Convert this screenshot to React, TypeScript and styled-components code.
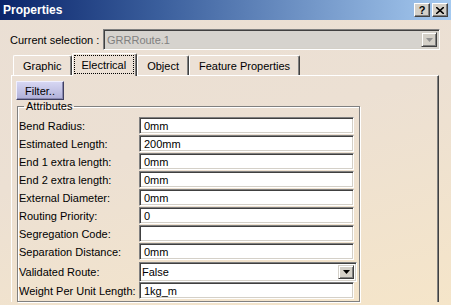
import React, { FC } from 'react'
import styled, { createGlobalStyle } from 'styled-components'

const GlobalStyle = createGlobalStyle`
  html, body {
    margin: 0;
    padding: 0;
    background: #ECE1D6;
  }
  body {
    font-family: "Liberation Sans", Arial, sans-serif;
    font-size: 11px;
    color: #000;
  }
`

const Window = styled.div`
  width: 451px;
  height: 305px;
  overflow: hidden;
  background: linear-gradient(165deg, #EADFD4 0%, #ECE0D3 45%, #F5E5C9 100%);
  display: flex;
  flex-direction: column;
`

const TitleBar = styled.div`
  height: 20px;
  flex: none;
  display: flex;
  align-items: center;
  justify-content: space-between;
  padding: 0 3px 0 3px;
  background: linear-gradient(90deg, #0A246A 0%, #3A5E9C 35%, #A6CAF0 100%);
`

const Title = styled.span`
  color: #fff;
  font-weight: bold;
  font-size: 12px;
`

const TitleButtons = styled.div`
  display: flex;
  gap: 2px;
`

const CaptionButton = styled.div`
  width: 14px;
  height: 12px;
  background: #D4D0C8;
  border: 1px solid;
  border-color: #fff #404040 #404040 #fff;
  box-shadow: inset -1px -1px 0 #808080;
  display: flex;
  align-items: center;
  justify-content: center;
  font-weight: bold;
  font-size: 11px;
  line-height: 12px;
`

const Body = styled.div`
  display: flex;
  flex-direction: column;
  padding: 9px 0 0 0;
`

const SelectionRow = styled.div`
  display: flex;
  align-items: center;
  padding-left: 10px;
`

const SelectionLabel = styled.span`
  width: 93px;
`

const Combo = styled.div<{ $disabled?: boolean; $width: number; $height: number; $inset: number }>`
  width: ${p => p.$width}px;
  height: ${p => p.$height}px;
  box-sizing: border-box;
  display: flex;
  align-items: center;
  justify-content: space-between;
  background: ${p => (p.$disabled ? '#D6D3CE' : '#fff')};
  color: ${p => (p.$disabled ? '#808080' : '#000')};
  border: 1px solid;
  border-color: #808080 #fff #fff #808080;
  box-shadow: inset 1px 1px 0 #404040, inset -1px -1px 0 #D4D0C8;
  padding: 2px 2px 2px ${p => p.$inset}px;
`

const DropButton = styled.div<{ $disabled?: boolean }>`
  width: 16px;
  height: 100%;
  box-sizing: border-box;
  background: #D4D0C8;
  border: 1px solid;
  border-color: #D4D0C8 #404040 #404040 #D4D0C8;
  box-shadow: inset 1px 1px 0 #fff, inset -1px -1px 0 #808080;
  display: flex;
  align-items: center;
  justify-content: center;
  svg { fill: ${p => (p.$disabled ? '#909090' : '#000')}; }
`

const TabStrip = styled.div`
  display: flex;
  align-items: flex-end;
  margin: 3px 0 0 13px;
  height: 22px;
  position: relative;
  z-index: 1;
`

const Tab = styled.div<{ $active?: boolean }>`
  height: ${p => (p.$active ? 23 : 20)}px;
  margin-bottom: ${p => (p.$active ? -1 : 0)}px;
  box-sizing: border-box;
  background: #ECE1D6;
  border-left: 1px solid #fff;
  border-top: 1px solid #fff;
  border-right: 1px solid #404040;
  border-top-left-radius: 2px;
  border-top-right-radius: 2px;
  box-shadow: inset -1px 0 0 #808080;
  padding: ${p => (p.$active ? '1px 2px 2px 1px' : '0 9px')};
  display: flex;
  align-items: center;
`

const FocusRing = styled.span`
  height: 100%;
  box-sizing: border-box;
  border: 1px dotted #000;
  padding: 0 7px;
  display: flex;
  align-items: center;
`

const Panel = styled.div`
  margin-left: 11px;
  width: 428px;
  flex: 1;
  box-sizing: border-box;
  border-top: 1px solid #fff;
  border-left: 1px solid #fff;
  border-right: 1px solid #404040;
  box-shadow: inset -1px 0 0 #808080;
  padding: 5px 0 0 4px;
  display: flex;
  flex-direction: column;
  align-items: flex-start;
`

const FilterButton = styled.div`
  width: 48px;
  height: 19px;
  box-sizing: border-box;
  border: 1px solid;
  border-color: #F0F0FF #404060 #404060 #F0F0FF;
  box-shadow: inset -1px -1px 0 #8888B0;
  background: linear-gradient(180deg, #D6D6F2 0%, #C4C4E6 50%, #B0B0D8 100%);
  display: flex;
  align-items: center;
  justify-content: center;
`

const GroupBox = styled.fieldset`
  margin: 0 0 0 1px;
  width: 343px;
  box-sizing: border-box;
  padding: 4px 0 1px 0;
  border: 1px solid #808080;
  box-shadow: 1px 1px 0 #fff, inset 1px 1px 0 #fff;
  min-inline-size: 0;
`

const Legend = styled.legend`
  margin-left: 6px;
  padding: 0 2px;
  line-height: 13px;
`

const Row = styled.div<{ $tall?: boolean }>`
  display: flex;
  align-items: center;
  height: ${p => (p.$tall ? 21 : 18)}px;
`

const Label = styled.span`
  width: 121px;
  padding-left: 1px;
  box-sizing: border-box;
  flex: none;
`

const Field = styled.div`
  width: 215px;
  height: 17px;
  box-sizing: border-box;
  align-self: flex-start;
  background: #fff;
  border: 1px solid;
  border-color: #808080 #fff #fff #808080;
  box-shadow: inset 1px 1px 0 #404040, inset -1px -1px 0 #D4D0C8;
  padding: 0 0 0 4px;
  display: flex;
  align-items: center;
`

const Arrow: FC = () => (
  <svg width="7" height="4" viewBox="0 0 7 4">
    <path d="M0 0h7L3.5 4z" />
  </svg>
)

const attributes: { label: string; value: string; combo?: boolean }[] = [
  { label: 'Bend Radius:', value: '0mm' },
  { label: 'Estimated Length:', value: '200mm' },
  { label: 'End 1 extra length:', value: '0mm' },
  { label: 'End 2 extra length:', value: '0mm' },
  { label: 'External Diameter:', value: '0mm' },
  { label: 'Routing Priority:', value: '0' },
  { label: 'Segregation Code:', value: '' },
  { label: 'Separation Distance:', value: '0mm' },
  { label: 'Validated Route:', value: 'False', combo: true },
  { label: 'Weight Per Unit Length:', value: '1kg_m' },
]

const tabs = ['Graphic', 'Electrical', 'Object', 'Feature Properties']

const App: FC = () => {
  return (
    <>
      <GlobalStyle />
      <Window>
        <TitleBar>
          <Title>Properties</Title>
          <TitleButtons>
            <CaptionButton>?</CaptionButton>
            <CaptionButton>
              <svg width="8" height="7" viewBox="0 0 8 7">
                <path d="M0 0l8 7M8 0L0 7" stroke="#000" strokeWidth="1.6" />
              </svg>
            </CaptionButton>
          </TitleButtons>
        </TitleBar>
        <Body>
          <SelectionRow>
            <SelectionLabel>Current selection :</SelectionLabel>
            <Combo $disabled $width={337} $height={21} $inset={3}>
              <span>GRRRoute.1</span>
              <DropButton $disabled>
                <Arrow />
              </DropButton>
            </Combo>
          </SelectionRow>
          <TabStrip>
            {tabs.map(tab =>
              tab === 'Electrical' ? (
                <Tab key={tab} $active>
                  <FocusRing>{tab}</FocusRing>
                </Tab>
              ) : (
                <Tab key={tab}>{tab}</Tab>
              )
            )}
          </TabStrip>
          <Panel>
            <FilterButton>Filter..</FilterButton>
            <GroupBox>
              <Legend>Attributes</Legend>
              {attributes.map(attr => (
                <Row key={attr.label} $tall={attr.combo}>
                  <Label>{attr.label}</Label>
                  {attr.combo ? (
                    <Combo $width={218} $height={20} $inset={2}>
                      <span>{attr.value}</span>
                      <DropButton>
                        <Arrow />
                      </DropButton>
                    </Combo>
                  ) : (
                    <Field>{attr.value}</Field>
                  )}
                </Row>
              ))}
            </GroupBox>
          </Panel>
        </Body>
      </Window>
    </>
  )
}

export default App
